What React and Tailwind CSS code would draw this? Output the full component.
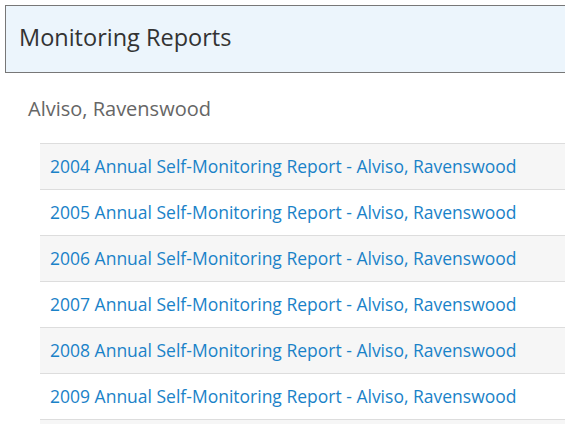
import React from 'react';

const years = ['2004', '2005', '2006', '2007', '2008', '2009'];

const App = () => {
  return (
    <div className="w-[565px] h-[424px] overflow-hidden bg-white font-['Open_Sans',sans-serif]">
      <div className="ml-[5px] mt-[5px] w-[600px] h-[68px] border border-[#777] bg-[#ecf5fc] flex items-center pl-[13px] pb-[3px]">
        <h1 className="text-[23.5px] text-[#333] leading-none">Monitoring Reports</h1>
      </div>
      <h2 className="ml-[28px] mt-[22px] text-[20px] text-[#666] leading-[28px]">Alviso, Ravenswood</h2>
      <ul className="ml-[40px] mt-[20px] w-[600px] border-t border-[#ddd]">
        {years.map((y, i) => (
          <li
            key={y}
            className={`h-[46px] border-b border-[#ddd] flex items-center pl-[10px] ${i % 2 === 0 ? 'bg-[#f6f6f6]' : 'bg-white'}`}
          >
            <a href="#" className="text-[17.5px] text-[#1a82c8]">
              {y} Annual Self-Monitoring Report - Alviso, Ravenswood
            </a>
          </li>
        ))}
        <li className="h-[46px] bg-[#f6f6f6]" />
      </ul>
    </div>
  );
};

export default App;
